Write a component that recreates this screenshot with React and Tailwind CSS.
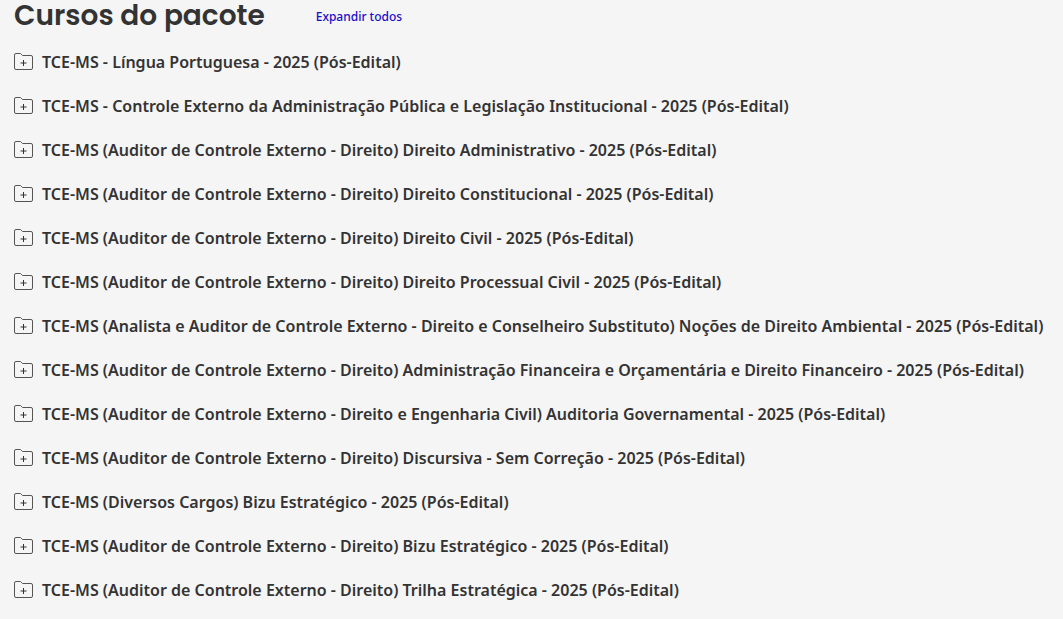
const courses = [
  'TCE-MS - Língua Portuguesa - 2025 (Pós-Edital)',
  'TCE-MS - Controle Externo da Administração Pública e Legislação Institucional - 2025 (Pós-Edital)',
  'TCE-MS (Auditor de Controle Externo - Direito) Direito Administrativo - 2025 (Pós-Edital)',
  'TCE-MS (Auditor de Controle Externo - Direito) Direito Constitucional - 2025 (Pós-Edital)',
  'TCE-MS (Auditor de Controle Externo - Direito) Direito Civil - 2025 (Pós-Edital)',
  'TCE-MS (Auditor de Controle Externo - Direito) Direito Processual Civil - 2025 (Pós-Edital)',
  'TCE-MS (Analista e Auditor de Controle Externo - Direito e Conselheiro Substituto) Noções de Direito Ambiental - 2025 (Pós-Edital)',
  'TCE-MS (Auditor de Controle Externo - Direito) Administração Financeira e Orçamentária e Direito Financeiro - 2025 (Pós-Edital)',
  'TCE-MS (Auditor de Controle Externo - Direito e Engenharia Civil) Auditoria Governamental - 2025 (Pós-Edital)',
  'TCE-MS (Auditor de Controle Externo - Direito) Discursiva - Sem Correção - 2025 (Pós-Edital)',
  'TCE-MS (Diversos Cargos) Bizu Estratégico - 2025 (Pós-Edital)',
  'TCE-MS (Auditor de Controle Externo - Direito) Bizu Estratégico - 2025 (Pós-Edital)',
  'TCE-MS (Auditor de Controle Externo - Direito) Trilha Estratégica - 2025 (Pós-Edital)',
];

function FolderPlus() {
  return (
    <svg width="19" height="18" viewBox="0 0 19 18" fill="none" stroke="#555" className="shrink-0" aria-hidden="true">
      <path d="M0.500 2a1.500 1.500 0 0 1 1.500-1.500h4.500l2 2h8.500a1.500 1.500 0 0 1 1.500 1.500v11a1.500 1.500 0 0 1-1.500 1.500h-15a1.500 1.500 0 0 1-1.500-1.500z" />
      <path d="M9.500 7v6M6.500 10h6" stroke="#333" />
    </svg>
  );
}

export default function App() {
  return (
    <main className="min-h-screen bg-[#f5f5f5] pl-3.5 font-['Noto_Sans',sans-serif] text-[#333]">
      <header className="flex items-center gap-[51px] pb-2">
        <h1 className="font-['Poppins','Inter',sans-serif] text-[28px] leading-8 font-semibold">Cursos do pacote</h1>
        <a href="#todos" className="pt-0.5 text-xs font-medium text-[#1a0dcc]">Expandir todos</a>
      </header>
      <ul>
        {courses.map((course) => (
          <li key={course}>
            <button type="button" className="flex h-11 items-center gap-[9px] text-left text-base font-semibold whitespace-nowrap">
              <FolderPlus />
              {course}
            </button>
          </li>
        ))}
      </ul>
    </main>
  );
}
